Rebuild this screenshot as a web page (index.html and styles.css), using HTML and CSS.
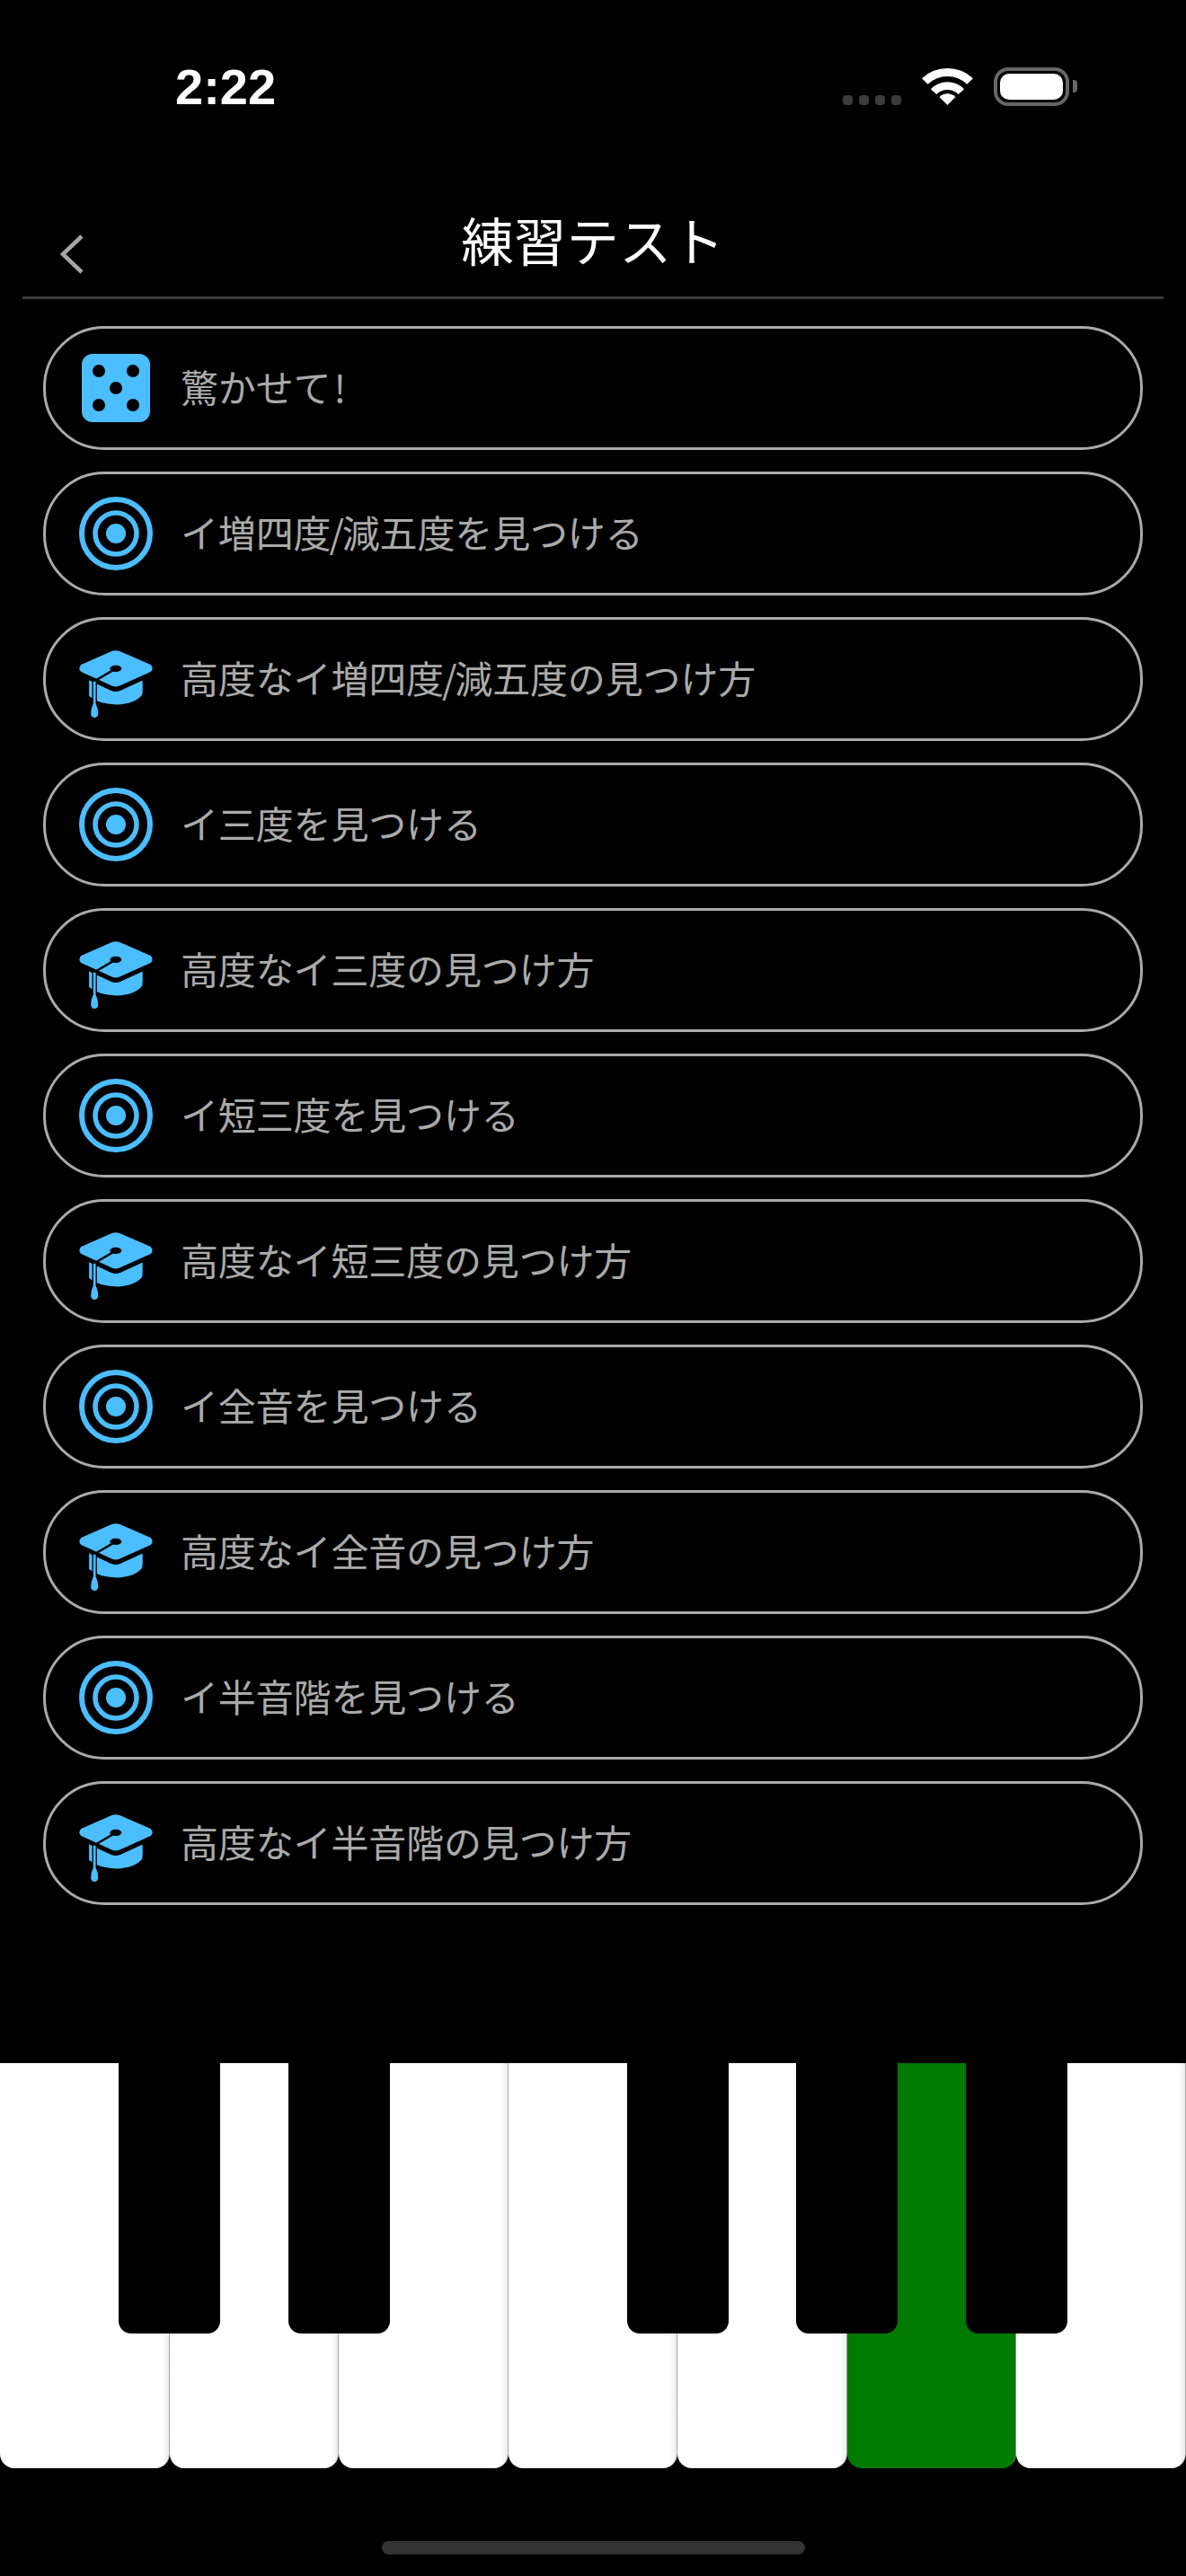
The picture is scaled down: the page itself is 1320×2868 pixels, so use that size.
FILE: index.html
```html
<!DOCTYPE html>
<html lang="ja">
<head>
	<meta charset="utf-8">
	<title>練習テスト</title>
	<link rel="stylesheet" href="styles.css">
</head>
<body>

<svg class="defs" width="0" height="0">
	<symbol id="icon-target" viewBox="0 0 82 82">
		<circle cx="41" cy="41" r="38" fill="none" stroke="#4bbeff" stroke-width="6"/>
		<circle cx="41" cy="41" r="23" fill="none" stroke="#4bbeff" stroke-width="5.5"/>
		<circle cx="41" cy="41" r="11" fill="#4bbeff"/>
	</symbol>
	<symbol id="icon-cap" viewBox="57 48 243 243" overflow="visible">
		<path fill="#4bbeff" d="M90 172 L90 226 Q120 252 180 254 Q240 252 265 222 Q268 205 266 172 L190 208 Q178 212 165 208 Z"/>
		<path fill="#4bbeff" d="M64 122 L165 78 Q178 73 191 78 L293 122 Q305 135 293 146 L191 192 Q178 197 165 192 L64 146 Q52 135 64 122 Z"/>
		<path fill="none" stroke="#000" stroke-width="8" stroke-linecap="round" d="M95 172 L165 204 Q178 208 191 204 L270 168"/>
		<path fill="none" stroke="#000" stroke-width="7" d="M178 135 L108 176"/>
		<ellipse cx="178" cy="135" rx="19" ry="11" fill="#000"/>
		<path fill="none" stroke="#000" stroke-width="16" d="M108 178 L108 258"/>
		<path fill="#4bbeff" d="M104 178 L112 178 L112 250 Q120 265 120 285 Q118 297 108 297 Q98 297 96 285 Q96 265 104 250 Z"/>
	</symbol>
</svg>

<div class="statusbar">
	<span class="clock">2:22</span>
	<div class="status-icons">
		<div class="signal"><i></i><i></i><i></i><i></i></div>
		<svg class="wifi" viewBox="375 75 172 127">
			<path d="M375 112 A125 125 0 0 1 547 112 L527 132 A95 95 0 0 0 395 132 Z"/>
			<path d="M405 148 A78 78 0 0 1 517 148 L498 166 A52 52 0 0 0 424 166 Z"/>
			<path d="M434 175 A38 38 0 0 1 488 175 L461 202 Z"/>
		</svg>
		<div class="battery"><div class="battery-fill"></div></div>
		<div class="battery-cap"></div>
	</div>
</div>

<header class="navbar">
	<div class="back">
		<svg viewBox="0 0 26 44" width="26" height="44"><path d="M24 2 L3 22 L24 42" fill="none" stroke="#a5a5a5" stroke-width="4.5"/></svg>
	</div>
	<h1>練習テスト</h1>
</header>

<main class="list">
	<a class="row">
		<div class="dice"><i></i><i></i><i></i><i></i><i></i></div>
		<span>驚かせて<b class="bang">!</b></span>
	</a>
	<a class="row"><svg class="icon"><use href="#icon-target"/></svg><span>イ増四度<b class="slash">/</b>減五度を見つける</span></a>
	<a class="row"><svg class="icon"><use href="#icon-cap"/></svg><span>高度なイ増四度<b class="slash">/</b>減五度の見つけ方</span></a>
	<a class="row"><svg class="icon"><use href="#icon-target"/></svg><span>イ三度を見つける</span></a>
	<a class="row"><svg class="icon"><use href="#icon-cap"/></svg><span>高度なイ三度の見つけ方</span></a>
	<a class="row"><svg class="icon"><use href="#icon-target"/></svg><span>イ短三度を見つける</span></a>
	<a class="row"><svg class="icon"><use href="#icon-cap"/></svg><span>高度なイ短三度の見つけ方</span></a>
	<a class="row"><svg class="icon"><use href="#icon-target"/></svg><span>イ全音を見つける</span></a>
	<a class="row"><svg class="icon"><use href="#icon-cap"/></svg><span>高度なイ全音の見つけ方</span></a>
	<a class="row"><svg class="icon"><use href="#icon-target"/></svg><span>イ半音階を見つける</span></a>
	<a class="row"><svg class="icon"><use href="#icon-cap"/></svg><span>高度なイ半音階の見つけ方</span></a>
</main>

<section class="piano">
	<div class="white"></div>
	<div class="white"></div>
	<div class="white"></div>
	<div class="white"></div>
	<div class="white"></div>
	<div class="white green"></div>
	<div class="white"></div>
	<div class="black b1"></div>
	<div class="black b2"></div>
	<div class="black b3"></div>
	<div class="black b4"></div>
	<div class="black b5"></div>
</section>

<div class="home-bar"></div>

</body>
</html>
```

FILE: styles.css
```css
*{box-sizing: border-box;}

html,body{margin: 0;padding: 0;background: #000;}
body{width: 1320px;height: 2868px;overflow: hidden;font-family: "Noto Sans CJK JP","Noto Sans",sans-serif;color: #fff;}

.defs{display: block;height: 0;}

/* status bar */
.statusbar{height: 196px;padding: 65px 121px 0 195px;display: flex;justify-content: space-between;align-items: flex-start;}
.clock{font-family: "Liberation Sans",Arial,sans-serif;font-weight: 700;font-size: 56px;line-height: 64px;}
.status-icons{display: flex;align-items: flex-start;padding-top: 10px;}
.signal{display: flex;gap: 7px;margin-top: 31px;margin-right: 23px;}
.signal i{display: block;width: 11px;height: 11px;border-radius: 4px;background: #3c3c3c;}
.wifi{width: 57px;height: 42px;fill: #fff;margin-right: 23px;}
.battery{width: 84px;height: 43px;border: 4px solid #666;border-radius: 16px;padding: 3px;}
.battery-fill{width: 100%;height: 100%;background: #fff;border-radius: 10px;}
.battery-cap{width: 5px;height: 14px;margin: 14px 0 0 4px;background: #666;border-radius: 0 4px 4px 0;}

/* nav */
.navbar{margin: 0 25px;height: 137px;border-bottom: 3px solid #3a3a3a;display: grid;grid-template-columns: 1fr auto 1fr;}
.back{padding: 65px 0 0 42px;}
.navbar h1{margin: 0;padding-top: 28px;font-size: 58px;line-height: 84px;font-weight: 400;letter-spacing: 0.6px;}

/* list */
.list{padding: 30px 48px 0;display: flex;flex-direction: column;gap: 24px;}
.row{height: 138px;border: 3px solid #aaa;border-radius: 68px;display: flex;align-items: center;padding-left: 37px;color: #aaa;font-size: 42px;line-height: 60px;letter-spacing: -0.15px;}
.row span{margin: -4px 0 0 31px;}
.icon{width: 82px;height: 82px;flex: none;overflow: visible;}
.row b{font-weight: 400;}
.slash{margin: 0 -2px;}
.bang{margin-left: 3px;}

.dice{width: 76px;height: 76px;margin: 0 3px;flex: none;background: #4bbeff;border-radius: 12px;display: grid;grid-template-columns: repeat(3,14px);grid-template-rows: repeat(3,14px);justify-content: space-between;align-content: space-between;padding: 12px;}
.dice i{display: block;background: #000;border-radius: 50%;}
.dice i:nth-child(1){grid-area: 1/1;}
.dice i:nth-child(2){grid-area: 1/3;}
.dice i:nth-child(3){grid-area: 2/2;}
.dice i:nth-child(4){grid-area: 3/1;}
.dice i:nth-child(5){grid-area: 3/3;}

/* piano */
.piano{position: absolute;left: 0;top: 2297px;width: 1320px;height: 451px;display: flex;}
.white{flex: 1;background: linear-gradient(to right,#fff 96%,#ececec 100%);border-right: 1px solid #a8a8a8;border-radius: 0 0 16px 16px;}
.white:last-of-type{border-right: 0;}
.green{background: #007a00;border-right: 1px solid #6f9f6f;}
.black{position: absolute;top: 0;width: 113px;height: 301px;background: #000;border-radius: 0 0 14px 14px;}
.b1{left: 132px;}
.b2{left: 321px;}
.b3{left: 698px;}
.b4{left: 886px;}
.b5{left: 1075px;}

.home-bar{position: absolute;left: 425px;top: 2829px;width: 471px;height: 15px;border-radius: 8px;background: #333;}
```
